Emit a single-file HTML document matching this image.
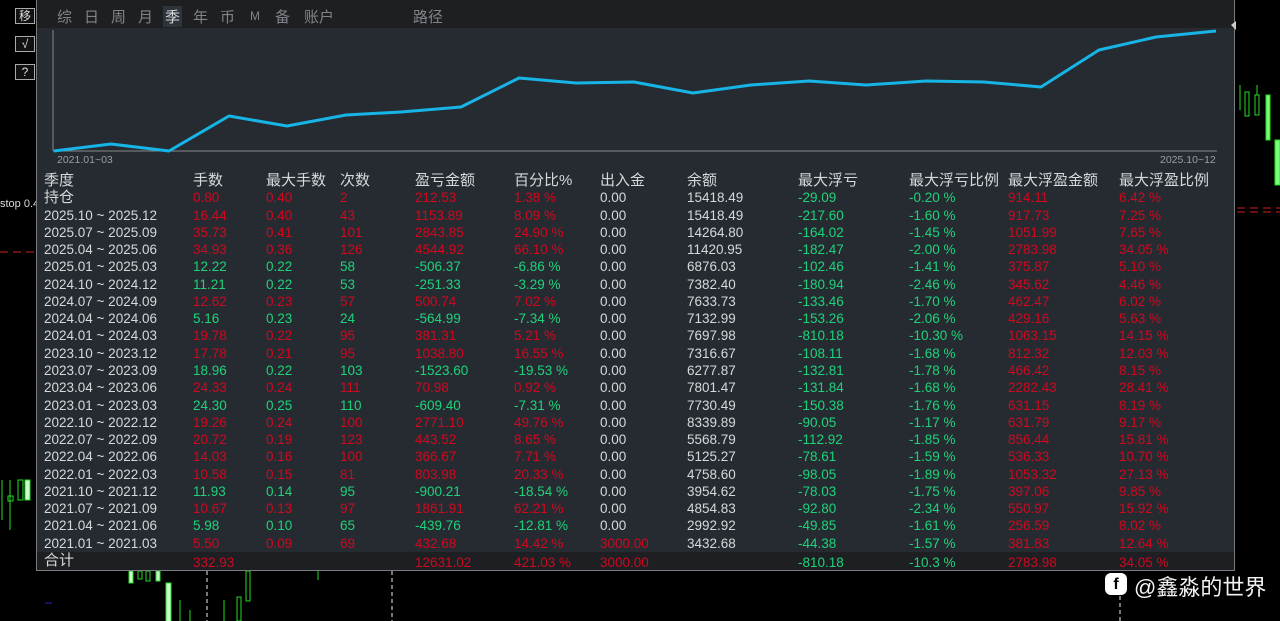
<!DOCTYPE html>
<html><head><meta charset="utf-8"><style>
*{margin:0;padding:0;box-sizing:border-box}
body{width:1280px;height:621px;background:#000;position:relative;overflow:hidden;font-family:"Liberation Sans","Noto Sans CJK SC",sans-serif}
.panel{position:absolute;left:36px;top:0;width:1199px;height:571px;background:#262b32;border:1px solid #7a7d80;border-top:none}
.tabs{position:absolute;left:0;top:0;width:1197px;height:28px;background:#1e1f21}
.tabs span{position:absolute;top:6px;font-size:15px;color:#80848a}
.r{position:absolute;left:0;width:1197px;height:17px;font-size:13.5px;line-height:17px;white-space:nowrap}
.r span{position:absolute}
.a{left:7px}.b{left:156px}.c{left:229px}.d{left:303px}.e{left:378px}.f{left:477px}.g{left:563px}.h{left:650px}.i{left:761px}.j{left:872px}.k{left:971px}.l{left:1082px}
.w{color:#d6d8da}.R{color:#d0081e}.G{color:#1ed27a}
.hd{font-size:15px;color:#d6d8da}
.btn{position:absolute;left:15px;width:20px;height:16px;border:1px solid #aaa;color:#ddd;font-size:12px;text-align:center;line-height:14px;background:#111}
</style></head><body>
<svg style="position:absolute;left:0;top:0" width="1280" height="621">
<g stroke="#22dd22" fill="none" stroke-width="1">
<line x1="1240" y1="85" x2="1240" y2="110"/><rect x="1245" y="92" width="4" height="24"/><rect x="1255" y="95" width="4" height="20"/><line x1="1257" y1="85" x2="1257" y2="95"/><rect x="1266" y="95" width="4" height="45" fill="#7f7"/><rect x="1275" y="140" width="5" height="45" fill="#7f7"/>
<line x1="2" y1="480" x2="2" y2="520"/><rect x="8" y="496" width="5" height="5"/><line x1="10" y1="480" x2="10" y2="530"/><rect x="18" y="480" width="5" height="20"/><rect x="25" y="480" width="5" height="20" fill="#ccffcc"/>
<rect x="129" y="571" width="4" height="12" fill="#ccffcc"/><rect x="138" y="571" width="4" height="8"/><rect x="146" y="571" width="4" height="10"/><rect x="156" y="571" width="4" height="10" fill="#ccffcc"/><rect x="166" y="583" width="5" height="40" fill="#ccffcc"/>
<line x1="180" y1="600" x2="180" y2="621"/><line x1="190" y1="610" x2="190" y2="621"/><line x1="224" y1="600" x2="224" y2="621"/><rect x="237" y="597" width="4" height="24"/><rect x="246" y="571" width="4" height="30"/><line x1="318" y1="571" x2="318" y2="580"/>
</g>
<g stroke="#eee" stroke-dasharray="4 3"><line x1="207" y1="571" x2="207" y2="621"/><line x1="392" y1="571" x2="392" y2="621"/><line x1="1120" y1="596" x2="1120" y2="621"/></g>
<g stroke="#c22" stroke-dasharray="8 5"><line x1="0" y1="252" x2="36" y2="252"/><line x1="1237" y1="208" x2="1280" y2="208"/><line x1="1237" y1="212" x2="1280" y2="212"/></g>
<line x1="45" y1="603" x2="52" y2="603" stroke="#22c"/>
</svg>
<div style="position:absolute;left:0;top:198px;font-size:11px;color:#ddd">stop 0.4</div>
<div class="btn" style="top:8px">移</div>
<div class="btn" style="top:36px">√</div>
<div class="btn" style="top:64px">?</div>
<div style="position:absolute;left:1105px;top:573px;width:22px;height:22px;border-radius:6px;background:#fff;color:#000;font-weight:bold;font-size:16px;text-align:center;line-height:23px">f</div>
<div style="position:absolute;left:1134px;top:570px;font-size:22px;color:#f2f2f2">@鑫淼的世界</div>

<div class="panel">
<div class="tabs">
<span style="left:20px">综</span><span style="left:47px">日</span><span style="left:74px">周</span><span style="left:101px">月</span><span style="left:126px;color:#d6d8da;background:#2e343c;padding:0 2px">季</span><span style="left:156px">年</span><span style="left:183px">币</span><span style="left:213px;font-size:12px;top:9px">M</span><span style="left:238px">备</span><span style="left:267px">账户</span><span style="left:376px">路径</span>
</div>
<svg style="position:absolute;left:0;top:0" width="1199" height="175">
<line x1="16" y1="30" x2="16" y2="151" stroke="#888"/>
<line x1="16" y1="151" x2="1180" y2="151" stroke="#888"/>
<polyline fill="none" stroke="#17b4e6" stroke-width="3" stroke-linejoin="round" points="17,151 74,144 132,151 192,116 250,126 309,115 364,112 424,107 482,78 539,83 597,82 656,93 714,85 772,81 829,85 889,81 947,82 1004,87 1062,50 1119,37 1179,31"/>
<polygon points="1194,25 1199,21 1199,30" fill="#ccc"/>
<text x="20" y="163" font-size="10.5" fill="#9a9ea3" font-family="Liberation Sans">2021.01~03</text>
<text x="1123" y="163" font-size="10.5" fill="#9a9ea3" font-family="Liberation Sans">2025.10~12</text>
</svg>

<div class="r hd" style="top:172px"><span class="a">季度</span><span class="b">手数</span><span class="c">最大手数</span><span class="d">次数</span><span class="e">盈亏金额</span><span class="f">百分比%</span><span class="g">出入金</span><span class="h">余额</span><span class="i">最大浮亏</span><span class="j">最大浮亏比例</span><span class="k">最大浮盈金额</span><span class="l">最大浮盈比例</span></div>
<div class="r" style="top:189px"><span class="a hd">持仓</span><span class="b R">0.80</span><span class="c R">0.40</span><span class="d R">2</span><span class="e R">212.53</span><span class="f R">1.38 %</span><span class="g w">0.00</span><span class="h w">15418.49</span><span class="i G">-29.09</span><span class="j G">-0.20 %</span><span class="k R">914.11</span><span class="l R">6.42 %</span></div>
<div class="r" style="top:207px"><span class="a w">2025.10 ~ 2025.12</span><span class="b R">16.44</span><span class="c R">0.40</span><span class="d R">43</span><span class="e R">1153.89</span><span class="f R">8.09 %</span><span class="g w">0.00</span><span class="h w">15418.49</span><span class="i G">-217.60</span><span class="j G">-1.60 %</span><span class="k R">917.73</span><span class="l R">7.25 %</span></div>
<div class="r" style="top:224px"><span class="a w">2025.07 ~ 2025.09</span><span class="b R">35.73</span><span class="c R">0.41</span><span class="d R">101</span><span class="e R">2843.85</span><span class="f R">24.90 %</span><span class="g w">0.00</span><span class="h w">14264.80</span><span class="i G">-164.02</span><span class="j G">-1.45 %</span><span class="k R">1051.99</span><span class="l R">7.65 %</span></div>
<div class="r" style="top:241px"><span class="a w">2025.04 ~ 2025.06</span><span class="b R">34.93</span><span class="c R">0.36</span><span class="d R">126</span><span class="e R">4544.92</span><span class="f R">66.10 %</span><span class="g w">0.00</span><span class="h w">11420.95</span><span class="i G">-182.47</span><span class="j G">-2.00 %</span><span class="k R">2783.98</span><span class="l R">34.05 %</span></div>
<div class="r" style="top:258px"><span class="a w">2025.01 ~ 2025.03</span><span class="b G">12.22</span><span class="c G">0.22</span><span class="d G">58</span><span class="e G">-506.37</span><span class="f G">-6.86 %</span><span class="g w">0.00</span><span class="h w">6876.03</span><span class="i G">-102.46</span><span class="j G">-1.41 %</span><span class="k R">375.87</span><span class="l R">5.10 %</span></div>
<div class="r" style="top:276px"><span class="a w">2024.10 ~ 2024.12</span><span class="b G">11.21</span><span class="c G">0.22</span><span class="d G">53</span><span class="e G">-251.33</span><span class="f G">-3.29 %</span><span class="g w">0.00</span><span class="h w">7382.40</span><span class="i G">-180.94</span><span class="j G">-2.46 %</span><span class="k R">345.62</span><span class="l R">4.46 %</span></div>
<div class="r" style="top:293px"><span class="a w">2024.07 ~ 2024.09</span><span class="b R">12.62</span><span class="c R">0.23</span><span class="d R">57</span><span class="e R">500.74</span><span class="f R">7.02 %</span><span class="g w">0.00</span><span class="h w">7633.73</span><span class="i G">-133.46</span><span class="j G">-1.70 %</span><span class="k R">462.47</span><span class="l R">6.02 %</span></div>
<div class="r" style="top:310px"><span class="a w">2024.04 ~ 2024.06</span><span class="b G">5.16</span><span class="c G">0.23</span><span class="d G">24</span><span class="e G">-564.99</span><span class="f G">-7.34 %</span><span class="g w">0.00</span><span class="h w">7132.99</span><span class="i G">-153.26</span><span class="j G">-2.06 %</span><span class="k R">429.16</span><span class="l R">5.63 %</span></div>
<div class="r" style="top:327px"><span class="a w">2024.01 ~ 2024.03</span><span class="b R">19.78</span><span class="c R">0.22</span><span class="d R">95</span><span class="e R">381.31</span><span class="f R">5.21 %</span><span class="g w">0.00</span><span class="h w">7697.98</span><span class="i G">-810.18</span><span class="j G">-10.30 %</span><span class="k R">1063.15</span><span class="l R">14.15 %</span></div>
<div class="r" style="top:345px"><span class="a w">2023.10 ~ 2023.12</span><span class="b R">17.78</span><span class="c R">0.21</span><span class="d R">95</span><span class="e R">1038.80</span><span class="f R">16.55 %</span><span class="g w">0.00</span><span class="h w">7316.67</span><span class="i G">-108.11</span><span class="j G">-1.68 %</span><span class="k R">812.32</span><span class="l R">12.03 %</span></div>
<div class="r" style="top:362px"><span class="a w">2023.07 ~ 2023.09</span><span class="b G">18.96</span><span class="c G">0.22</span><span class="d G">103</span><span class="e G">-1523.60</span><span class="f G">-19.53 %</span><span class="g w">0.00</span><span class="h w">6277.87</span><span class="i G">-132.81</span><span class="j G">-1.78 %</span><span class="k R">466.42</span><span class="l R">8.15 %</span></div>
<div class="r" style="top:379px"><span class="a w">2023.04 ~ 2023.06</span><span class="b R">24.33</span><span class="c R">0.24</span><span class="d R">111</span><span class="e R">70.98</span><span class="f R">0.92 %</span><span class="g w">0.00</span><span class="h w">7801.47</span><span class="i G">-131.84</span><span class="j G">-1.68 %</span><span class="k R">2282.43</span><span class="l R">28.41 %</span></div>
<div class="r" style="top:397px"><span class="a w">2023.01 ~ 2023.03</span><span class="b G">24.30</span><span class="c G">0.25</span><span class="d G">110</span><span class="e G">-609.40</span><span class="f G">-7.31 %</span><span class="g w">0.00</span><span class="h w">7730.49</span><span class="i G">-150.38</span><span class="j G">-1.76 %</span><span class="k R">631.15</span><span class="l R">8.19 %</span></div>
<div class="r" style="top:414px"><span class="a w">2022.10 ~ 2022.12</span><span class="b R">19.26</span><span class="c R">0.24</span><span class="d R">100</span><span class="e R">2771.10</span><span class="f R">49.76 %</span><span class="g w">0.00</span><span class="h w">8339.89</span><span class="i G">-90.05</span><span class="j G">-1.17 %</span><span class="k R">631.79</span><span class="l R">9.17 %</span></div>
<div class="r" style="top:431px"><span class="a w">2022.07 ~ 2022.09</span><span class="b R">20.72</span><span class="c R">0.19</span><span class="d R">123</span><span class="e R">443.52</span><span class="f R">8.65 %</span><span class="g w">0.00</span><span class="h w">5568.79</span><span class="i G">-112.92</span><span class="j G">-1.85 %</span><span class="k R">856.44</span><span class="l R">15.81 %</span></div>
<div class="r" style="top:448px"><span class="a w">2022.04 ~ 2022.06</span><span class="b R">14.03</span><span class="c R">0.16</span><span class="d R">100</span><span class="e R">366.67</span><span class="f R">7.71 %</span><span class="g w">0.00</span><span class="h w">5125.27</span><span class="i G">-78.61</span><span class="j G">-1.59 %</span><span class="k R">536.33</span><span class="l R">10.70 %</span></div>
<div class="r" style="top:466px"><span class="a w">2022.01 ~ 2022.03</span><span class="b R">10.58</span><span class="c R">0.15</span><span class="d R">81</span><span class="e R">803.98</span><span class="f R">20.33 %</span><span class="g w">0.00</span><span class="h w">4758.60</span><span class="i G">-98.05</span><span class="j G">-1.89 %</span><span class="k R">1053.32</span><span class="l R">27.13 %</span></div>
<div class="r" style="top:483px"><span class="a w">2021.10 ~ 2021.12</span><span class="b G">11.93</span><span class="c G">0.14</span><span class="d G">95</span><span class="e G">-900.21</span><span class="f G">-18.54 %</span><span class="g w">0.00</span><span class="h w">3954.62</span><span class="i G">-78.03</span><span class="j G">-1.75 %</span><span class="k R">397.06</span><span class="l R">9.85 %</span></div>
<div class="r" style="top:500px"><span class="a w">2021.07 ~ 2021.09</span><span class="b R">10.67</span><span class="c R">0.13</span><span class="d R">97</span><span class="e R">1861.91</span><span class="f R">62.21 %</span><span class="g w">0.00</span><span class="h w">4854.83</span><span class="i G">-92.80</span><span class="j G">-2.34 %</span><span class="k R">550.97</span><span class="l R">15.92 %</span></div>
<div class="r" style="top:517px"><span class="a w">2021.04 ~ 2021.06</span><span class="b G">5.98</span><span class="c G">0.10</span><span class="d G">65</span><span class="e G">-439.76</span><span class="f G">-12.81 %</span><span class="g w">0.00</span><span class="h w">2992.92</span><span class="i G">-49.85</span><span class="j G">-1.61 %</span><span class="k R">256.59</span><span class="l R">8.02 %</span></div>
<div class="r" style="top:535px"><span class="a w">2021.01 ~ 2021.03</span><span class="b R">5.50</span><span class="c R">0.09</span><span class="d R">69</span><span class="e R">432.68</span><span class="f R">14.42 %</span><span class="g R">3000.00</span><span class="h w">3432.68</span><span class="i G">-44.38</span><span class="j G">-1.57 %</span><span class="k R">381.83</span><span class="l R">12.64 %</span></div>
<div class="r" style="top:552px;height:18px;background:#1d1f22"><span class="a hd">合计</span><span class="b R" style="top:2px">332.93</span><span class="e R" style="top:2px">12631.02</span><span class="f R" style="top:2px">421.03 %</span><span class="g R" style="top:2px">3000.00</span><span class="i G" style="top:2px">-810.18</span><span class="j G" style="top:2px">-10.3 %</span><span class="k R" style="top:2px">2783.98</span><span class="l R" style="top:2px">34.05 %</span></div>
</div>
</body></html>
